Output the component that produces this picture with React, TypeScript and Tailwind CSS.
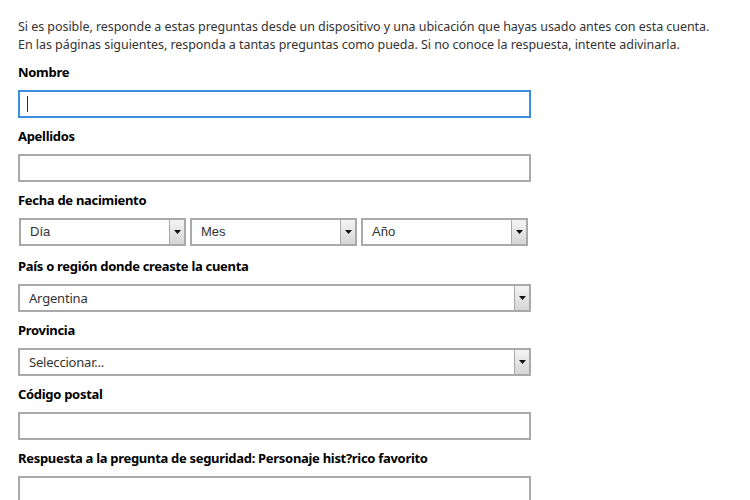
const Label = ({ children }: { children: React.ReactNode }) => (
  <div className="h-[20px] text-[13px] font-bold leading-[20px] tracking-[-0.3px] text-black">{children}</div>
);

const TextBox = ({ focused = false }: { focused?: boolean }) => (
  <div
    className={
      focused
        ? "relative h-[28px] w-[513px] border-2 border-[#3c8ee0] bg-white"
        : "h-[28px] w-[513px] border-2 border-[#a9a9a9] bg-white"
    }
  >
    {focused && <span className="absolute left-[7px] top-[4px] h-[16px] w-px bg-[#333]" />}
  </div>
);

const Arrow = () => (
  <div className="flex h-full w-[15px] items-center justify-center border-l border-[#a9a9a9] bg-gradient-to-b from-[#f4f4f4] to-[#d6d6d6]">
    <svg width="7" height="4" viewBox="0 0 7 4">
      <path d="M0 0h7L3.5 4z" fill="#111" />
    </svg>
  </div>
);

const Select = ({ value, width, arial = false }: { value: string; width: string; arial?: boolean }) => (
  <div className={`flex h-[28px] ${width} items-stretch border-2 border-[#a9a9a9] bg-white`}>
    <span
      className={
        arial
          ? "flex-1 pl-[9px] text-[13px] leading-[24px] text-[#333] [font-family:'Liberation_Sans',Arial,sans-serif]"
          : "flex-1 pl-[9px] text-[13px] leading-[24px] tracking-[-0.2px] text-[#333]"
      }
    >
      {value}
    </span>
    <Arrow />
  </div>
);

const Field = ({ label, children, className = "" }: { label: string; children: React.ReactNode; className?: string }) => (
  <div className={`flex flex-col gap-[8px] ${className}`}>
    <Label>{label}</Label>
    {children}
  </div>
);

export default function App() {
  return (
    <div className="h-[500px] w-[750px] overflow-hidden bg-white px-[18px] pt-[18px] text-[#333] [font-family:'Noto_Sans',sans-serif]">
      <p className="text-[12.5px] leading-[18px] tracking-[-0.05px] text-[#333]">
        Si es posible, responde a estas preguntas desde un dispositivo y una ubicación que hayas usado antes con esta cuenta.
        <br />
        En las páginas siguientes, responda a tantas preguntas como pueda. Si no conoce la respuesta, intente adivinarla.
      </p>
      <div className="mt-[8px] flex flex-col gap-[8px]">
        <Field label="Nombre">
          <TextBox focused />
        </Field>
        <Field label="Apellidos">
          <TextBox />
        </Field>
        <Field label="Fecha de nacimiento" className="mb-[2px]">
          <div className="flex gap-[4px] pl-px">
            <Select value="Día" width="w-[167px]" arial />
            <Select value="Mes" width="w-[167px]" arial />
            <Select value="Año" width="w-[167px]" arial />
          </div>
        </Field>
        <Field label="País o región donde creaste la cuenta">
          <Select value="Argentina" width="w-[513px]" />
        </Field>
        <Field label="Provincia">
          <Select value="Seleccionar..." width="w-[513px]" />
        </Field>
        <Field label="Código postal">
          <TextBox />
        </Field>
        <Field label="Respuesta a la pregunta de seguridad: Personaje hist?rico favorito">
          <TextBox />
        </Field>
      </div>
    </div>
  );
}
